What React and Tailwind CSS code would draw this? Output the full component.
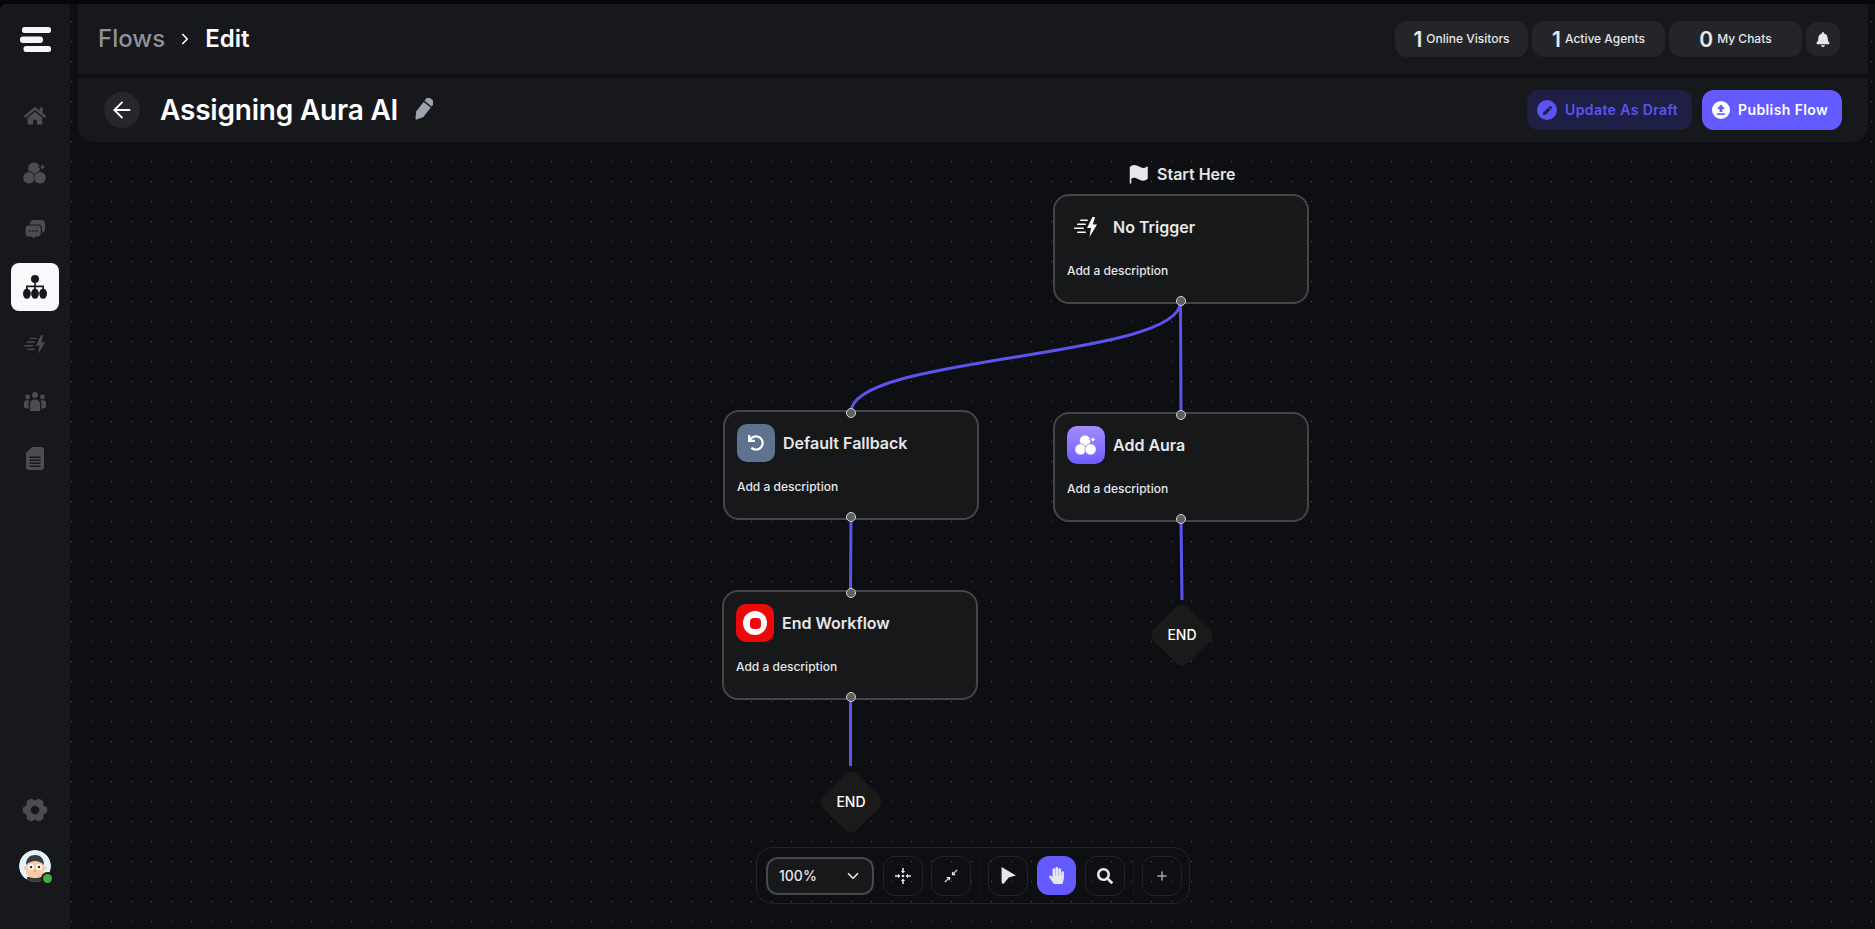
import { ArrowLeft, ChevronDown, ChevronRight, Plus } from "lucide-react";
import { FaBell, FaHandPaper, FaHome, FaPen, FaSearch, FaUndo } from "react-icons/fa";
import { PiFlagFill, PiGearSixFill } from "react-icons/pi";

function AuraIcon({ className, gap }) {
  return (
    <svg viewBox="0 0 24 22" className={className} fill="currentColor">
      <circle cx="11" cy="6.3" r="6.3" stroke={gap} strokeWidth="0.8" />
      <circle cx="6" cy="15.8" r="6.2" stroke={gap} strokeWidth="0.8" />
      <circle cx="17" cy="15.8" r="6.2" stroke={gap} strokeWidth="0.8" />
      <path d="M19.6 0.5 C20 3.5 20.8 4.4 24 4.9 C20.8 5.4 20 6.3 19.6 9.4 C19.2 6.3 18.4 5.4 15.2 4.9 C18.4 4.4 19.2 3.5 19.6 0.5 Z" stroke={gap} strokeWidth="0.8" />
    </svg>
  );
}

function TriggerIcon({ className }) {
  return (
    <svg viewBox="0 0 24 20" className={className} fill="currentColor">
      <path d="M18.5 0 L13 11 H17 L15.5 20 L23 7.5 H18.8 L21 0 Z" />
      <rect x="6" y="2.5" width="8" height="1.6" rx="0.8" />
      <rect x="3" y="6.5" width="9" height="1.6" rx="0.8" />
      <rect x="0" y="10.5" width="10" height="1.6" rx="0.8" />
      <rect x="3" y="14.5" width="9" height="1.6" rx="0.8" />
    </svg>
  );
}

function ChatsIcon({ className }) {
  return (
    <svg viewBox="0 0 20 20" className={className}>
      <rect x="5" y="0" width="15" height="13" rx="4" fill="currentColor" />
      <path d="M3 5 H13 A3.4 3.4 0 0 1 16.4 8.4 V13.6 A3.4 3.4 0 0 1 13 17 H10.5 L8.5 19.5 L6.5 17 H3 A3 3 0 0 1 0 14 V8 A3 3 0 0 1 3 5 Z" fill="currentColor" stroke="#17181b" strokeWidth="1.2" />
      <circle cx="5" cy="11" r="0.9" fill="#17181b" />
      <circle cx="8.2" cy="11" r="0.9" fill="#17181b" />
      <circle cx="11.4" cy="11" r="0.9" fill="#17181b" />
    </svg>
  );
}

function FlowIcon({ className }) {
  return (
    <svg viewBox="0 0 24 24" className={className} fill="currentColor">
      <circle cx="12" cy="4" r="4" />
      <rect x="11.2" y="6" width="1.6" height="8" />
      <path d="M3 15 V10.6 H21 V15 H19.4 V12.2 H4.6 V15 Z" />
      <ellipse cx="3.9" cy="18.6" rx="3.9" ry="5.2" />
      <ellipse cx="12" cy="18.6" rx="3.9" ry="5.2" />
      <ellipse cx="20.1" cy="18.6" rx="3.9" ry="5.2" />
    </svg>
  );
}

function UsersIcon({ className }) {
  return (
    <svg viewBox="0 0 22 19" className={className} fill="currentColor">
      <circle cx="11" cy="3" r="3" />
      <circle cx="3.6" cy="5" r="2.4" />
      <circle cx="18.4" cy="5" r="2.4" />
      <path d="M6 19 V12 A4.2 4.2 0 0 1 10.2 7.6 H11.8 A4.2 4.2 0 0 1 16 12 V19 Z" />
      <path d="M0 15.5 V11 A2.8 2.8 0 0 1 2.8 8.2 H5.6 A6 6 0 0 0 4.6 11.5 V17 Z" />
      <path d="M22 15.5 V11 A2.8 2.8 0 0 0 19.2 8.2 H16.4 A6 6 0 0 1 17.4 11.5 V17 Z" />
    </svg>
  );
}

function DocIcon({ className }) {
  return (
    <svg viewBox="0 0 18 23" className={className}>
      <path d="M6 0 H15 A3 3 0 0 1 18 3 V20 A3 3 0 0 1 15 23 H3 A3 3 0 0 1 0 20 V6 Z" fill="currentColor" />
      <rect x="3.5" y="9.5" width="11" height="1.5" fill="#17181b" />
      <rect x="3.5" y="12.5" width="11" height="1.5" fill="#17181b" />
      <rect x="3.5" y="15.5" width="11" height="1.5" fill="#17181b" />
      <rect x="3.5" y="18.5" width="11" height="1.5" fill="#17181b" />
    </svg>
  );
}

function PencilIcon({ className }) {
  return (
    <svg viewBox="0 0 20 24" className={className} fill="currentColor">
      <g transform="translate(10.5 11.5) rotate(38)">
        <path d="M-4.6 -7.5 V-10 A3 3 0 0 1 -1.6 -13 H1.6 A3 3 0 0 1 4.6 -10 V-7.5 Z" />
        <path d="M-4.6 -6 H4.6 V6 L0.8 12 A1 1 0 0 1 -0.8 12 L-4.6 6 Z" />
      </g>
    </svg>
  );
}

function Avatar() {
  return (
    <div className="relative w-8 h-8">
      <svg viewBox="0 0 32 32" className="w-8 h-8 rounded-full">
        <circle cx="16" cy="16" r="16" fill="#e3f4fd" />
        <rect x="8" y="27" width="16" height="5" fill="#3a3a3a" />
        <circle cx="6.5" cy="18" r="2" fill="#fbc9a4" />
        <circle cx="25.5" cy="18" r="2" fill="#fbc9a4" />
        <rect x="7" y="9" width="18" height="19" rx="7" fill="#fbc9a4" />
        <path d="M7 15 C7 8 11 5 16 5 C21 5 25 8 25 15 C22 12 19 11 16 11 C13 11 10 12 7 15 Z" fill="#3b3b3b" />
        <circle cx="12" cy="17" r="3" fill="#fff" />
        <circle cx="20" cy="17" r="3" fill="#fff" />
        <circle cx="12" cy="17" r="1.3" fill="#333" />
        <circle cx="20" cy="17" r="1.3" fill="#333" />
        <circle cx="16" cy="21" r="1.1" fill="#ef9a76" />
      </svg>
      <span className="absolute right-0 bottom-0 w-[9px] h-[9px] rounded-full bg-[#3fae49] ring-2 ring-[#17181b] -mr-[1px] -mb-[1px]" />
    </div>
  );
}

function Sidebar() {
  return (
    <aside className="w-[70px] shrink-0 bg-[#17181b] rounded-tl-md flex flex-col items-center text-[#4c4d51] relative z-10">
      <svg viewBox="0 0 31 25" className="w-[31px] h-[25px] mt-[23px] text-[#f5f6f7]" fill="currentColor">
        <rect x="2" y="0" width="29" height="6" rx="2.5" />
        <rect x="0" y="9.5" width="23" height="6.5" rx="3" />
        <rect x="3.5" y="19" width="27.5" height="6" rx="2.5" />
      </svg>
      <div className="mt-[35px] flex flex-col items-center">
        <div className="h-[57px] flex items-center justify-center"><FaHome className="w-[22px] h-[20px]" /></div>
        <div className="h-[57px] flex items-center justify-center"><AuraIcon className="w-6 h-[22px]" gap="#17181b" /></div>
        <div className="h-[57px] flex items-center justify-center"><ChatsIcon className="w-5 h-5" /></div>
        <div className="w-12 h-12 rounded-lg bg-[#f8f9fb] text-[#17181b] flex items-center justify-center my-[5px]">
          <FlowIcon className="w-6 h-6" />
        </div>
        <div className="h-[57px] flex items-center justify-center"><TriggerIcon className="w-[22px] h-[19px]" /></div>
        <div className="h-[57px] flex items-center justify-center"><UsersIcon className="w-[22px] h-[19px]" /></div>
        <div className="h-[57px] flex items-center justify-center"><DocIcon className="w-[18px] h-[23px]" /></div>
      </div>
      <div className="mt-auto flex flex-col items-center pb-[47px]">
        <PiGearSixFill className="w-7 h-7" />
        <div className="mt-[26px]"><Avatar /></div>
      </div>
    </aside>
  );
}

function Stat({ value, label }) {
  return (
    <div className="w-[133px] h-9 rounded-xl bg-[#232528] flex items-center justify-center gap-1 text-[#e5e7eb]">
      <span className="text-[21px] font-semibold leading-none">{value}</span>
      <span className="text-xs font-medium">{label}</span>
    </div>
  );
}

function TopBar() {
  return (
    <div className="h-[70px] bg-[#17181b] flex items-center pl-5 pr-[28px]">
      <span className="text-2xl font-medium text-[#8f9297]">Flows</span>
      <ChevronRight className="w-[18px] h-[18px] mx-[11px] text-white" strokeWidth={2.2} />
      <span className="text-2xl font-semibold text-white">Edit</span>
      <div className="ml-auto flex items-center gap-1">
        <Stat value="1" label="Online Visitors" />
        <Stat value="1" label="Active Agents" />
        <Stat value="0" label="My Chats" />
        <div className="w-[34px] h-[34px] rounded-xl bg-[#232528] flex items-center justify-center">
          <FaBell className="w-[14px] h-[15px] text-[#e5e7eb]" />
        </div>
      </div>
    </div>
  );
}

function TitleBar() {
  return (
    <div className="h-16 mt-1 bg-[#17181b] rounded-b-2xl flex items-center pl-[26px] pr-[26px]">
      <button className="w-9 h-9 rounded-full bg-[#26272b] flex items-center justify-center text-white">
        <ArrowLeft className="w-[26px] h-[26px]" strokeWidth={1.7} />
      </button>
      <h1 className="ml-5 text-[28px] font-semibold text-white leading-none tracking-[-0.2px]">Assigning Aura AI</h1>
      <PencilIcon className="ml-[15px] w-5 h-6 text-[#9ca3af]" />
      <div className="ml-auto flex items-center gap-[10px]">
        <button className="w-[165px] h-10 pl-[10px] rounded-xl bg-[#1f1f45] text-[#5b54f0] text-sm font-semibold tracking-[0.4px] flex items-center gap-2">
          <span className="w-5 h-5 rounded-full bg-[#5b54f0] flex items-center justify-center">
            <FaPen className="w-[9px] h-[9px] text-[#1f1f45]" />
          </span>
          Update As Draft
        </button>
        <button className="w-[140px] h-10 pl-[10px] rounded-xl bg-[#635bff] text-white text-sm font-semibold tracking-[0.4px] flex items-center gap-2">
          <svg viewBox="0 0 18 18" className="w-[18px] h-[18px]">
            <circle cx="9" cy="9" r="9" fill="#fff" />
            <path d="M9 3.5 L13 8 H10.4 V11 H7.6 V8 H5 Z" fill="#635bff" />
            <rect x="5" y="12.3" width="8" height="1.6" fill="#635bff" />
          </svg>
          Publish Flow
        </button>
      </div>
    </div>
  );
}

function Handle({ x, y }) {
  return (
    <span
      className="absolute w-[10px] h-[10px] rounded-full bg-[#5f5f5f] border border-[#d4d4d4] -translate-x-1/2 -translate-y-1/2"
      style={{ left: x, top: y }}
    />
  );
}

function FlowNode({ x, y, title, icon }) {
  return (
    <div
      className="absolute w-[256px] h-[110px] rounded-2xl border-2 border-[#444547] bg-[#17181a] p-3"
      style={{ left: x, top: y }}
    >
      <div className="flex items-center gap-2 h-[38px]">
        {icon}
        <span className="text-base font-semibold text-[#e5e7eb]">{title}</span>
      </div>
      <p className="mt-[17px] text-xs font-medium text-[#e5e7eb] leading-4">Add a description</p>
    </div>
  );
}

function EndDiamond({ x, y }) {
  return (
    <div
      className="absolute w-[48px] h-[48px] -translate-x-1/2 -translate-y-1/2 flex items-center justify-center"
      style={{ left: x, top: y }}
    >
      <div className="absolute inset-0 rotate-45 rounded-lg bg-[#1a1a1b]" />
      <span className="relative text-sm font-medium text-white">END</span>
    </div>
  );
}

function ToolBtn({ children, active }) {
  return (
    <button
      className={
        active
          ? "w-[39px] h-[39px] rounded-xl bg-[#635bff] flex items-center justify-center text-[#e5e7eb]"
          : "w-10 h-10 rounded-xl border border-[#232427] flex items-center justify-center text-[#e5e7eb]"
      }
    >
      {children}
    </button>
  );
}

function Toolbar() {
  return (
    <div className="absolute left-[686px] top-[847px] w-[434px] h-[57px] rounded-2xl border border-[#232427] flex items-center pl-[9px]">
      <div className="w-[108px] h-[38px] rounded-xl border-2 border-[#47484a] bg-[#17181a] flex items-center justify-between pl-[11px] pr-[10px] text-[#e5e7eb]">
        <span className="text-sm font-medium">100%</span>
        <ChevronDown className="w-[18px] h-[18px]" strokeWidth={2.2} />
      </div>
      <div className="ml-[9px] flex items-center gap-2">
        <ToolBtn>
          <svg viewBox="0 0 16 16" className="w-4 h-4" fill="currentColor">
            <circle cx="8" cy="8" r="1.3" />
            <path d="M8 5.5 L5.8 3 H7.2 V0 H8.8 V3 H10.2 Z" />
            <path d="M8 10.5 L5.8 13 H7.2 V16 H8.8 V13 H10.2 Z" />
            <path d="M5.5 8 L3 5.8 V7.2 H0 V8.8 H3 V10.2 Z" />
            <path d="M10.5 8 L13 5.8 V7.2 H16 V8.8 H13 V10.2 Z" />
          </svg>
        </ToolBtn>
        <ToolBtn>
          <svg viewBox="0 0 16 16" className="w-[14px] h-[14px]" fill="currentColor">
            <path d="M9 7 V2.5 L10.8 4.2 L14.5 0.5 L15.5 1.5 L11.8 5.2 L13.5 7 Z" />
            <path d="M7 9 V13.5 L5.2 11.8 L1.5 15.5 L0.5 14.5 L4.2 10.8 L2.5 9 Z" />
          </svg>
        </ToolBtn>
      </div>
      <div className="w-px h-10 bg-[#17181a] mx-2" />
      <div className="flex items-center gap-[9px]">
        <ToolBtn>
          <svg viewBox="0 0 16 16" className="w-[17px] h-[17px]" fill="currentColor">
            <path d="M1.5 0 L15 8 L8.2 9.8 L3.6 15.6 Q1.8 16.2 1.5 14 Z" />
          </svg>
        </ToolBtn>
        <ToolBtn active>
          <FaHandPaper className="w-[15px] h-[17px]" />
        </ToolBtn>
        <ToolBtn>
          <FaSearch className="w-4 h-4" />
        </ToolBtn>
      </div>
      <div className="w-px h-10 bg-[#17181a] mx-2" />
      <ToolBtn>
        <Plus className="w-[14px] h-[14px] text-[#a8a9ab]" strokeWidth={2.5} />
      </ToolBtn>
    </div>
  );
}

function Canvas() {
  // coordinates here are relative to the main area, sidebar is 70px
  return (
    <div className="absolute inset-0">
      <svg className="absolute inset-0 w-full h-full" fill="none" stroke="#5b54f0" strokeWidth="3">
        <path d="M781 412 C781 355 1110 359 1110.5 302" />
        <path d="M1110.5 302 L1111 415" />
        <path d="M781 516 L780.5 592" />
        <path d="M780.5 696 L780.5 766" />
        <path d="M1111 519 L1112 600" />
      </svg>

      <div className="absolute left-[1056px] top-[162px] flex items-center gap-[7px] text-[#e5e7eb]">
        <PiFlagFill className="w-6 h-6" />
        <span className="text-base font-semibold">Start Here</span>
      </div>

      <FlowNode
        x={983}
        y={194}
        title="No Trigger"
        icon={
          <span className="w-[38px] h-[38px] flex items-center justify-center text-white">
            <TriggerIcon className="w-6 h-5" />
          </span>
        }
      />
      <FlowNode
        x={653}
        y={410}
        title="Default Fallback"
        icon={
          <span className="w-[38px] h-[38px] rounded-[10px] bg-[#5f7391] flex items-center justify-center text-white">
            <FaUndo className="w-4 h-4" />
          </span>
        }
      />
      <FlowNode
        x={983}
        y={412}
        title="Add Aura"
        icon={
          <span className="w-[38px] h-[38px] rounded-[10px] bg-gradient-to-b from-[#a48bff] to-[#6d5cff] flex items-center justify-center text-white">
            <AuraIcon className="w-[22px] h-5" gap="#8a74ff" />
          </span>
        }
      />
      <FlowNode
        x={652}
        y={590}
        title="End Workflow"
        icon={
          <span className="w-[38px] h-[38px] rounded-[10px] bg-[#ea0a0a] flex items-center justify-center">
            <span className="w-6 h-6 rounded-full bg-white flex items-center justify-center">
              <span className="w-[11px] h-[11px] rounded-sm bg-[#ea0a0a]" />
            </span>
          </span>
        }
      />

      <Handle x={1110.5} y={301} />
      <Handle x={1111} y={415} />
      <Handle x={1111} y={519} />
      <Handle x={781} y={412.5} />
      <Handle x={781} y={516.5} />
      <Handle x={780.5} y={592.5} />
      <Handle x={780.5} y={696.5} />

      <EndDiamond x={1112} y={635} />
      <EndDiamond x={781} y={802} />

      <Toolbar />
    </div>
  );
}

export default function App() {
  return (
    <div className="h-[929px] w-full overflow-hidden bg-[#060709] pt-1 flex font-['Inter',sans-serif]">
      <Sidebar />
      <main className="relative flex-1 -mt-1 bg-[#0e0f12] bg-[radial-gradient(circle_at_10.5px_10.5px,#55565a_0.5px,transparent_0.8px)] bg-[size:20px_20px] bg-[position:-9px_-9px]">
        <Canvas />
        <div className="relative">
          <div className="h-1 bg-[#060709]" />
          <div className="pl-2 pr-[7px]">
            <div className="bg-[#0e0f12]">
              <TopBar />
              <TitleBar />
            </div>
          </div>
        </div>
      </main>
    </div>
  );
}
